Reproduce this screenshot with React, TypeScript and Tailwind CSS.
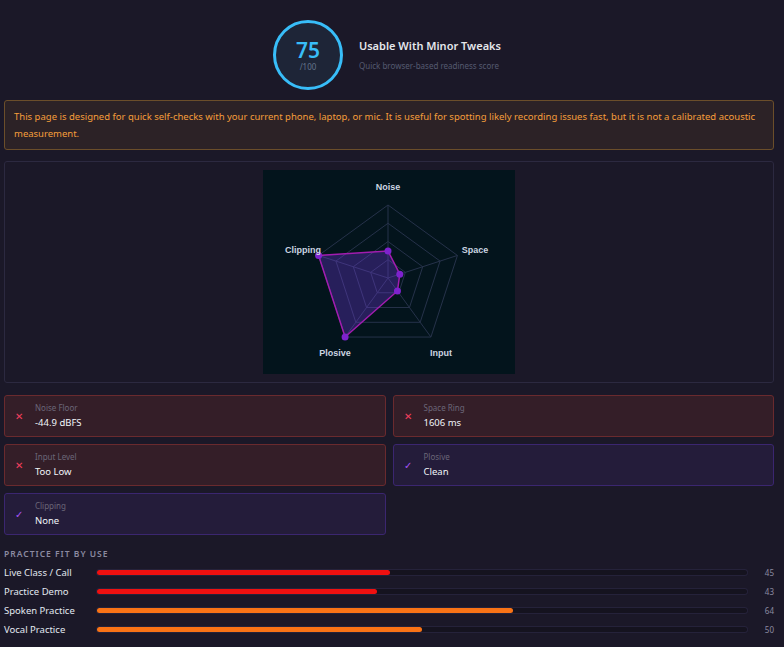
import React from 'react'

const cx = 125
const cy = 108
const R = 73
const axes = ['Noise', 'Space', 'Input', 'Plosive', 'Clipping']
const values = [0.37, 0.17, 0.22, 1, 1]

function pt(i: number, r: number) {
  const a = -Math.PI / 2 + (i * 2 * Math.PI) / 5
  return [cx + Math.cos(a) * r, cy + Math.sin(a) * r]
}

function Radar() {
  const rings = [0.25, 0.5, 0.75, 1]
  const labelPos = [
    [125, 20],
    [212, 83],
    [178, 186],
    [72, 186],
    [40, 83],
  ]
  const data = values.map((v, i) => pt(i, v * R))
  return (
    <svg width="252" height="204" className="bg-[#03141c]">
      {rings.map((r) => (
        <polygon
          key={r}
          points={axes.map((_, i) => pt(i, R * r).join(',')).join(' ')}
          fill="none"
          stroke="#26324a"
          strokeWidth="1"
        />
      ))}
      {axes.map((_, i) => {
        const [x, y] = pt(i, R)
        return <line key={i} x1={cx} y1={cy} x2={x} y2={y} stroke="#26324a" />
      })}
      <polygon points={data.map((p) => p.join(',')).join(' ')} fill="rgba(124,58,237,0.3)" stroke="#a21caf" strokeWidth="1.5" />
      {data.map(([x, y], i) => (
        <circle key={i} cx={x} cy={y} r="3.5" fill="#7e22ce" />
      ))}
      {axes.map((a, i) => (
        <text key={a} x={labelPos[i][0]} y={labelPos[i][1]} textAnchor="middle" fill="#cbd5e1" fontSize="9" fontWeight="bold" fontFamily="'Liberation Sans', sans-serif">
          {a}
        </text>
      ))}
    </svg>
  )
}

const metrics = [
  { label: 'Noise Floor', value: '-44.9 dBFS', ok: false },
  { label: 'Space Ring', value: '1606 ms', ok: false },
  { label: 'Input Level', value: 'Too Low', ok: false },
  { label: 'Plosive', value: 'Clean', ok: true },
  { label: 'Clipping', value: 'None', ok: true },
]

const fits = [
  { name: 'Live Class / Call', score: 45, color: 'bg-[#ef1010]' },
  { name: 'Practice Demo', score: 43, color: 'bg-[#ef1010]' },
  { name: 'Spoken Practice', score: 64, color: 'bg-[#f97316]' },
  { name: 'Vocal Practice', score: 50, color: 'bg-[#f97316]' },
]

export default function App() {
  return (
    <div className="min-h-[647px] bg-[#1b1828] pl-1 pr-[10px] font-['Inter','Liberation_Sans',sans-serif] text-white">
      <div className="flex items-center justify-center gap-4 pl-[6px] pt-[20px]">
        <div className="flex h-[70px] w-[70px] flex-col items-center justify-center rounded-full border-[3px] border-[#38bdf8] bg-[#1e2537]">
          <span className="text-[21px] font-semibold leading-none text-[#38bdf8]">75</span>
          <span className="mt-[2px] text-[8px] leading-none text-[#64748b]">/100</span>
        </div>
        <div className="pr-[10px]">
          <div className="text-[11px] font-semibold text-[#e5e7eb]">Usable With Minor Tweaks</div>
          <div className="mt-[6px] text-[8px] text-[#555a70]">Quick browser-based readiness score</div>
        </div>
      </div>

      <div className="mt-[10px] rounded-[3px] border border-[#6b4e2a] bg-[#2c2226] px-[9px] py-[7px] text-[9.5px] leading-[17px] text-[#f59e3b]">
        This page is designed for quick self-checks with your current phone, laptop, or mic. It is useful for spotting likely recording issues fast, but it is not a calibrated acoustic measurement.
      </div>

      <div className="mt-[11px] flex h-[222px] items-center justify-center rounded-[3px] border border-[#2c2940] bg-[#1b1828]">
        <Radar />
      </div>

      <div className="mt-[12px] grid grid-cols-2 gap-x-[7px] gap-y-[7px]">
        {metrics.map((m) => (
          <div
            key={m.label}
            className={`flex h-[42px] items-center rounded-[3px] border pl-[10px] ${m.ok ? 'border-[#3b2670] bg-[#241c3a]' : 'border-[#6a2a2e] bg-[#341e28]'}`}
          >
            <span className={`w-[16px] text-[10px] ${m.ok ? 'text-[#a855f7]' : 'text-[#f43f5e]'}`}>{m.ok ? '✓' : '✕'}</span>
            <div className="ml-[4px]">
              <div className="text-[8px] text-[#6b6678]">{m.label}</div>
              <div className="mt-[2px] text-[9.5px] text-[#f1f5f9]">{m.value}</div>
            </div>
          </div>
        ))}
      </div>

      <div className="mt-[13px] text-[8.5px] font-semibold tracking-[1px] text-[#8b8aa0]">PRACTICE FIT BY USE</div>
      <div className="mt-[5px] flex flex-col gap-[5px]">
        {fits.map((f) => (
          <div key={f.name} className="flex h-[14px] items-center">
            <span className="w-[93px] text-[9.5px] text-[#e2e8f0]">{f.name}</span>
            <div className="h-[5px] flex-1 rounded-full bg-[#15131f] ring-1 ring-[#25223a]">
              <div className={`h-full rounded-full ${f.color}`} style={{ width: `${f.score}%` }} />
            </div>
            <span className="w-[27px] text-right text-[8px] text-[#8b8aa0]">{f.score}</span>
          </div>
        ))}
      </div>
    </div>
  )
}
